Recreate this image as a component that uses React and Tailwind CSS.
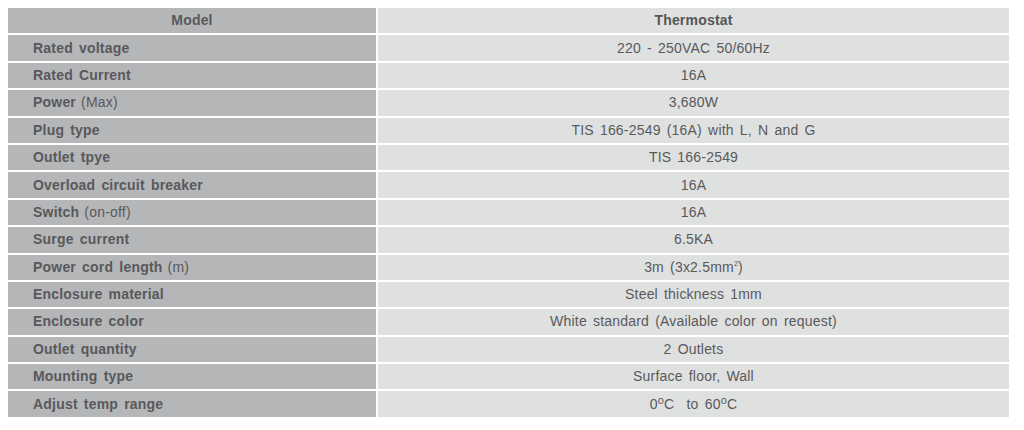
const rows = [
  { label: 'Rated voltage', value: '220 - 250VAC 50/60Hz' },
  { label: 'Rated Current', value: '16A' },
  { label: 'Power', note: '(Max)', value: '3,680W' },
  { label: 'Plug type', value: 'TIS 166-2549 (16A) with L, N and G' },
  { label: 'Outlet tpye', value: 'TIS 166-2549' },
  { label: 'Overload circuit breaker', value: '16A' },
  { label: 'Switch', note: '(on-off)', value: '16A' },
  { label: 'Surge current', value: '6.5KA' },
  {
    label: 'Power cord length',
    note: '(m)',
    value: (
      <>
        3m (3x2.5mm<sup className="text-[7px] -top-[6px]">2</sup>)
      </>
    ),
  },
  { label: 'Enclosure material', value: 'Steel thickness 1mm' },
  { label: 'Enclosure color', value: 'White standard (Available color on request)' },
  { label: 'Outlet quantity', value: '2 Outlets' },
  { label: 'Mounting type', value: 'Surface floor, Wall' },
  {
    label: 'Adjust temp range',
    value: (
      <>
        0<sup className="text-[11px] -top-[5px]">o</sup>C&nbsp;&nbsp;to 60<sup className="text-[11px] -top-[5px]">o</sup>C
      </>
    ),
  },
]

export default function App() {
  return (
    <div
      className="w-[1024px] h-[430px] bg-white pt-[8px] pl-[8px] text-[14px] tracking-[0.2px] [word-spacing:2px]"
      style={{ fontFamily: '"Liberation Sans", Arial, sans-serif' }}
    >
      <div className="grid grid-cols-[368px_631px] gap-x-[2px] gap-y-[2px] auto-rows-[25.4px]">
        {/* Header */}
        <div className="bg-[#b5b6b8] text-[#58595b] font-bold flex items-center justify-center">Model</div>
        <div className="bg-[#dfe0e0] text-[#555657] font-bold flex items-center justify-center">Thermostat</div>

        {rows.map((r, i) => (
          <div key={i} className="contents">
            <div className="bg-[#b5b6b8] text-[#58595b] flex items-center pl-[25px]">
              <span className="font-bold">{r.label}</span>
              {r.note && <span className="ml-[5px]">{r.note}</span>}
            </div>
            <div className="bg-[#dfe0e0] text-[#5a5a5b] flex items-center justify-center">
              <span>{r.value}</span>
            </div>
          </div>
        ))}
      </div>
    </div>
  )
}
